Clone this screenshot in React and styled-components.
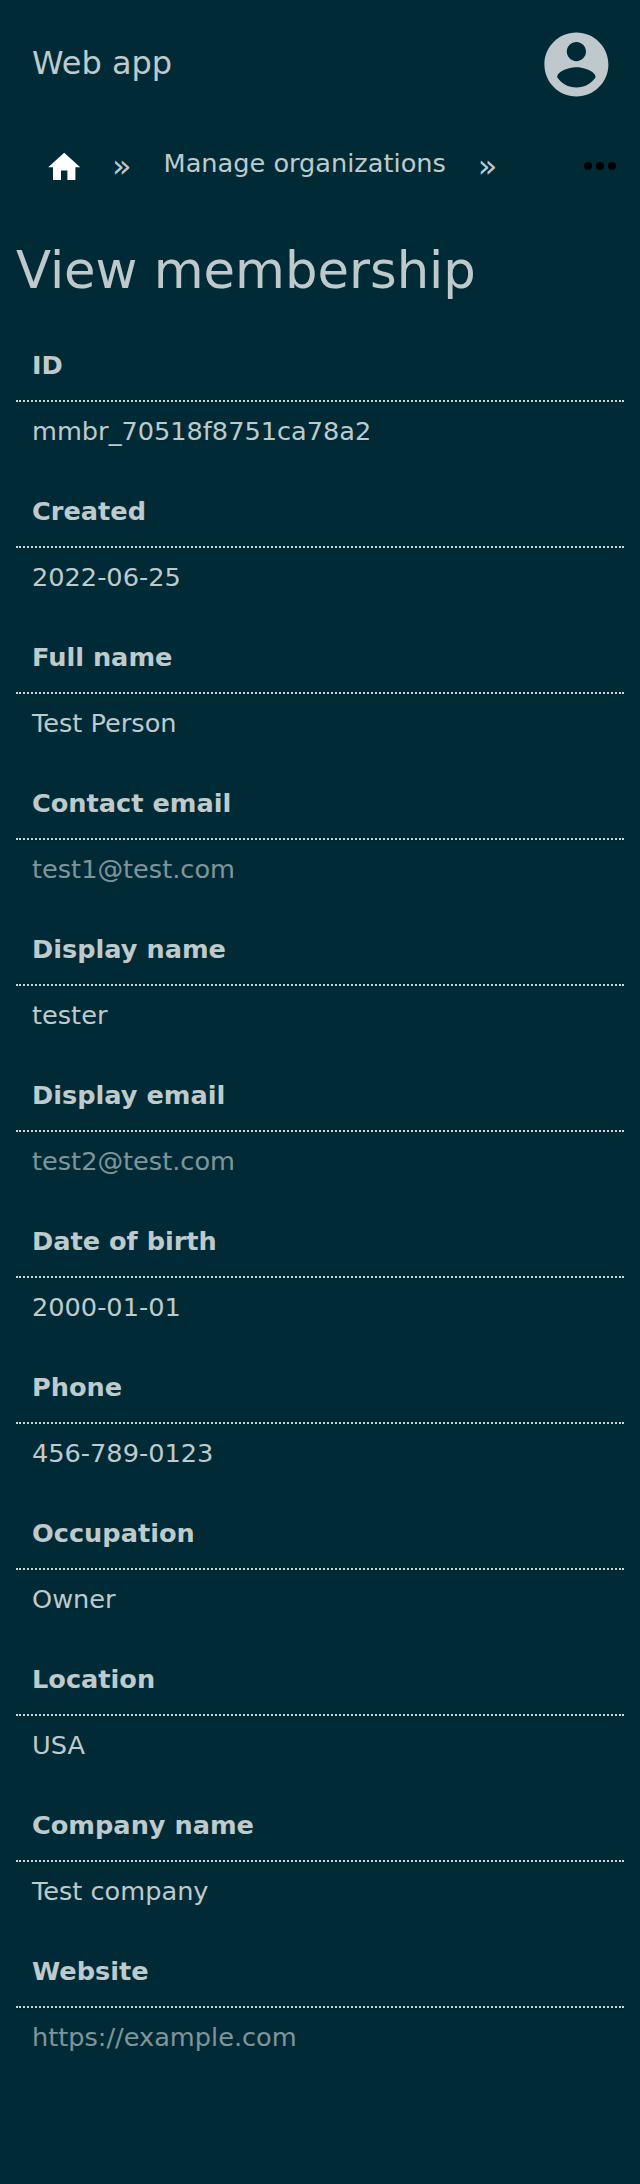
import React from "react";
import styled, { createGlobalStyle } from "styled-components";

const GlobalStyle = createGlobalStyle`
  *, *::before, *::after { box-sizing: border-box; }
  body {
    margin: 0;
    background: #002b36;
    color: rgba(255, 255, 255, 0.75);
    font-family: "DejaVu Sans", sans-serif;
    font-size: 32px;
  }
`;

const Page = styled.div`
  min-height: 2184px;
  background: #002b36;
`;

const Header = styled.header`
  display: flex;
  align-items: center;
  justify-content: space-between;
  height: 128px;
  padding: 0 25.6px 0 32px;
`;

const AppName = styled.span`
  line-height: 40px;
  padding-bottom: 2px;
`;

const Icon = styled.svg`
  display: block;
  flex: none;
  width: ${({ $size }) => $size}px;
  height: ${({ $size }) => $size}px;
  fill: ${({ $color }) => $color || "currentColor"};
`;

const Breadcrumbs = styled.nav`
  display: flex;
  align-items: center;
  height: 76px;
  padding: 0 16px 0 44.8px;
`;

const HomeLink = styled.a`
  padding-top: 2px;
`;

const Separator = styled.span`
  width: 19.6px;
  margin: 0 32px 0 ${({ $before }) => $before}px;
  line-height: 40px;
`;

const Crumb = styled.a`
  font-size: 25.6px;
  line-height: 32px;
  padding-bottom: 6px;
`;

const More = styled.button`
  margin-left: auto;
  padding: 0;
  border: 0;
  background: none;
`;

const Title = styled.h1`
  margin: 0;
  padding: 33px 16px 0;
  height: 124px;
  font-size: 51.2px;
  font-weight: 400;
  line-height: 66px;
`;

const Details = styled.dl`
  margin: 0;
  padding: 0 16px;
  font-size: 25.6px;
  line-height: 30px;
`;

const Term = styled.dt`
  height: 74px;
  padding: 22px 16px 0;
  font-weight: 700;
  border-bottom: 2px dotted rgba(255, 255, 255, 0.8);
`;

const Value = styled.dd`
  height: 72px;
  margin: 0;
  padding: 14px 16px 0;
`;

const Link = styled.a`
  color: rgba(255, 255, 255, 0.5);
`;

const fields = [
  ["ID", "mmbr_70518f8751ca78a2"],
  ["Created", "2022-06-25"],
  ["Full name", "Test Person"],
  ["Contact email", "test1@test.com", true],
  ["Display name", "tester"],
  ["Display email", "test2@test.com", true],
  ["Date of birth", "2000-01-01"],
  ["Phone", "456-789-0123"],
  ["Occupation", "Owner"],
  ["Location", "USA"],
  ["Company name", "Test company"],
  ["Website", "https://example.com", true],
];

export default function App() {
  return (
    <Page>
      <GlobalStyle />
      <Header>
        <AppName>Web app</AppName>
        <Icon $size={76.8} viewBox="0 0 24 24">
          <path d="M12 2C6.48 2 2 6.48 2 12s4.48 10 10 10 10-4.48 10-10S17.52 2 12 2zm0 3c1.66 0 3 1.34 3 3s-1.34 3-3 3-3-1.34-3-3 1.34-3 3-3zm0 14.2c-2.5 0-4.71-1.28-6-3.22.03-1.99 4-3.08 6-3.08 1.99 0 5.97 1.09 6 3.08-1.29 1.94-3.5 3.22-6 3.22z" />
        </Icon>
      </Header>
      <Breadcrumbs>
        <HomeLink aria-label="Home">
          <Icon $size={38.4} $color="#fff" viewBox="0 0 24 24">
            <path d="M10 20v-6h4v6h5v-8h3L12 3 2 12h3v8z" />
          </Icon>
        </HomeLink>
        <Separator $before={28.8}>»</Separator>
        <Crumb>Manage organizations</Crumb>
        <Separator $before={32}>»</Separator>
        <More aria-label="More">
          <Icon $size={48} $color="#000" viewBox="0 0 24 24">
            <circle cx="6" cy="12" r="2" />
            <circle cx="12" cy="12" r="2" />
            <circle cx="18" cy="12" r="2" />
          </Icon>
        </More>
      </Breadcrumbs>
      <Title>View membership</Title>
      <Details>
        {fields.map(([label, value, link]) => (
          <React.Fragment key={label}>
            <Term>{label}</Term>
            <Value>{link ? <Link>{value}</Link> : value}</Value>
          </React.Fragment>
        ))}
      </Details>
    </Page>
  );
}
